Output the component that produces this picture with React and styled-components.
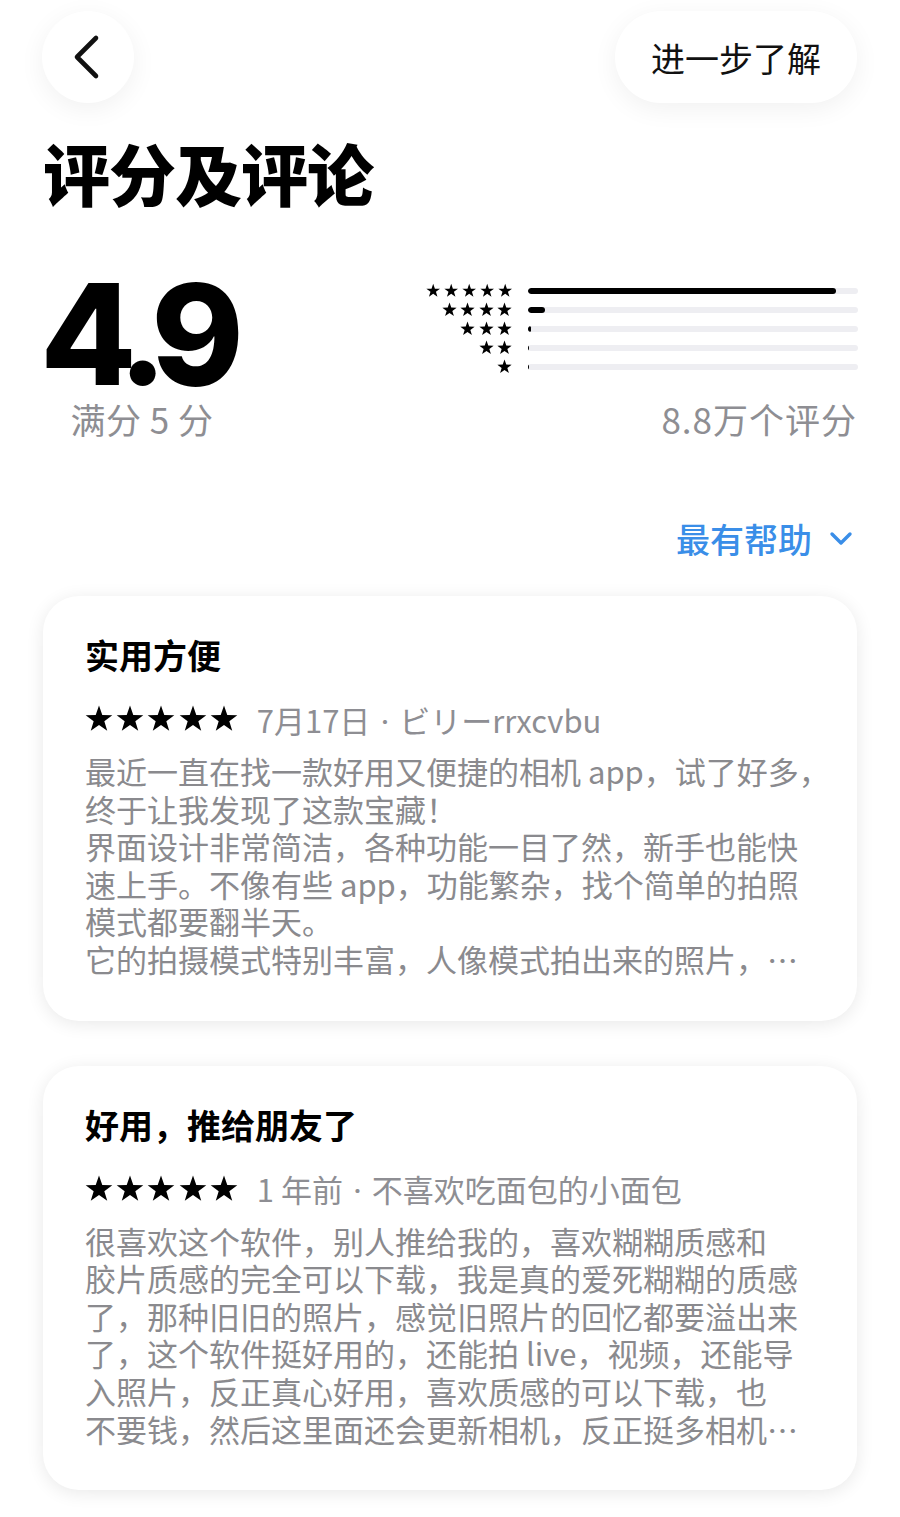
import React from "react";
import styled, { createGlobalStyle } from "styled-components";

const GlobalStyle = createGlobalStyle`
  body {
    margin: 0;
    background: #ffffff;
    font-family: "Noto Sans CJK SC", "Noto Sans", sans-serif;
    color: #000;
  }
`;

const histogram = [
  { stars: 5, pct: 93.3 },
  { stars: 4, pct: 5 },
  { stars: 3, pct: 1 },
  { stars: 2, pct: 0.3 },
  { stars: 1, pct: 0.3 },
];

const reviews = [
  {
    title: "实用方便",
    when: "7月17日",
    author: "ビリーrrxcvbu",
    lines: [
      "最近一直在找一款好用又便捷的相机 app，试了好多，",
      "终于让我发现了这款宝藏！",
      "界面设计非常简洁，各种功能一目了然，新手也能快",
      "速上手。不像有些 app，功能繁杂，找个简单的拍照",
      "模式都要翻半天。",
      "它的拍摄模式特别丰富，人像模式拍出来的照片，…",
    ],
  },
  {
    title: "好用，推给朋友了",
    when: "1 年前",
    author: "不喜欢吃面包的小面包",
    lines: [
      "很喜欢这个软件，别人推给我的，喜欢糊糊质感和",
      "胶片质感的完全可以下载，我是真的爱死糊糊的质感",
      "了，那种旧旧的照片，感觉旧照片的回忆都要溢出来",
      "了，这个软件挺好用的，还能拍 live，视频，还能导",
      "入照片，反正真心好用，喜欢质感的可以下载，也",
      "不要钱，然后这里面还会更新相机，反正挺多相机…",
    ],
  },
];

const Page = styled.div`
  padding: 11px 43px 40px 42px;
`;

const TopBar = styled.div`
  display: flex;
  justify-content: space-between;
  align-items: center;
`;

const RoundButton = styled.button`
  width: 92px;
  height: 92px;
  border: none;
  border-radius: 46px;
  background: #fff;
  box-shadow: 0 6px 26px rgba(0, 0, 0, 0.06);
  display: flex;
  align-items: center;
  justify-content: center;
  padding: 0;
`;

const PillButton = styled.button`
  height: 92px;
  width: 242px;
  border: none;
  border-radius: 46px;
  background: #fff;
  box-shadow: 0 6px 26px rgba(0, 0, 0, 0.06);
  font-family: "Noto Sans CJK SC", sans-serif;
  font-size: 34px;
  color: #111;
  padding: 0;
`;

const Title = styled.h1`
  margin: 29px 0 0 1px;
  font-size: 67px;
  line-height: 80px;
  font-weight: 900;
  letter-spacing: -1px;
`;

const Summary = styled.div`
  margin-top: 52px;
  display: grid;
  grid-template-columns: auto 1fr;
`;

const ScoreColumn = styled.div`
  display: flex;
  flex-direction: column;
  align-items: center;
  width: 200px;
`;

const BigScore = styled.div`
  font-family: Inter, "Liberation Sans", sans-serif;
  font-weight: 800;
  font-size: 140px;
  line-height: 140px;
  letter-spacing: -14px;
  margin-right: 14px;
`;

const Caption = styled.div`
  font-size: 35px;
  line-height: 40px;
  color: #8e8e93;
  margin-top: -5px;
  letter-spacing: ${(p) => (p.right ? "1px" : "0.5px")};
  text-align: ${(p) => (p.right ? "right" : "center")};
`;

const RightColumn = styled.div`
  display: flex;
  flex-direction: column;
  align-items: flex-end;
`;

const Histogram = styled.div`
  margin-top: 17px;
  width: 431px;
  height: 123px;
  display: flex;
  flex-direction: column;
`;

const HistRow = styled.div`
  display: grid;
  grid-template-columns: 86px 1fr;
  column-gap: 16px;
  align-items: center;
  height: 19px;
`;

const StarGroup = styled.div`
  display: flex;
  justify-content: ${(p) => (p.right ? "flex-end" : "flex-start")};
  gap: ${(p) => p.gap}px;
`;

const Track = styled.div`
  height: 6px;
  border-radius: 3px;
  background: #eeeef2;
  overflow: hidden;
  margin-right: -1px;
`;

const Fill = styled.div`
  height: 100%;
  border-radius: 3px;
  background: #000;
  min-width: 1px;
`;

const SortRow = styled.div`
  margin-top: 78px;
  display: flex;
  justify-content: flex-end;
  align-items: center;
  gap: 17px;
  color: #3a8ee8;
  font-size: 34px;
  line-height: 44px;
  font-weight: 500;
  padding-right: 4px;
`;

const CardList = styled.div`
  margin-top: 35px;
  display: flex;
  flex-direction: column;
  gap: 45px;
  padding-left: 1px;
`;

const Card = styled.div`
  background: #fff;
  border-radius: 36px;
  box-shadow: 0 3px 18px rgba(0, 0, 0, 0.09);
  padding: 37px 42px 43px 42px;
`;

const CardTitle = styled.div`
  font-size: 34px;
  line-height: 44px;
  font-weight: 700;
`;

const MetaRow = styled.div`
  margin-top: 22px;
  display: flex;
  align-items: center;
  gap: 19px;
  height: 40px;
`;

const MetaText = styled.span`
  font-size: 31px;
  color: #8e8e93;
  white-space: nowrap;
`;

const Dot = styled.span`
  font-family: Inter, "Liberation Sans", sans-serif;
  margin: 0 10px;
`;

const Body = styled.div`
  margin-top: 13px;
  font-size: 31px;
  line-height: 37.6px;
  color: #8a8a8e;
`;

const BodyLine = styled.div`
  white-space: nowrap;
`;

const starPoints = (size) => {
  const c = size / 2;
  const outer = size / 2;
  const inner = outer * 0.4;
  const pts = [];
  for (let i = 0; i < 10; i++) {
    const a = ((-90 + i * 36) * Math.PI) / 180;
    const r = i % 2 ? inner : outer;
    pts.push(`${(c + r * Math.cos(a)).toFixed(2)},${(c + 0.5 + r * Math.sin(a)).toFixed(2)}`);
  }
  return pts.join(" ");
};

const Star = ({ size }) => (
  <svg width={size} height={size} viewBox={`0 0 ${size} ${size}`}>
    <polygon points={starPoints(size)} fill="#000" />
  </svg>
);

const Stars = ({ count, size, gap, right }) => (
  <StarGroup gap={gap} right={right}>
    {Array.from({ length: count }).map((_, i) => (
      <Star key={i} size={size} />
    ))}
  </StarGroup>
);

const BackIcon = () => (
  <svg width="36" height="46" viewBox="0 0 36 46">
    <path d="M26 4 L7 23 L26 42" fill="none" stroke="#111" strokeWidth="4.6" strokeLinecap="round" strokeLinejoin="round" />
  </svg>
);

const ChevronDown = () => (
  <svg width="24" height="16" viewBox="0 0 24 16">
    <path d="M3 3 L12 12 L21 3" fill="none" stroke="#3a8ee8" strokeWidth="3.4" strokeLinecap="round" strokeLinejoin="round" />
  </svg>
);

const ReviewCard = ({ review }) => (
  <Card>
    <CardTitle>{review.title}</CardTitle>
    <MetaRow>
      <Stars count={5} size={28} gap={3.2} />
      <MetaText>
        {review.when}
        <Dot>·</Dot>
        {review.author}
      </MetaText>
    </MetaRow>
    <Body>
      {review.lines.map((l, i) => (
        <BodyLine key={i}>{l}</BodyLine>
      ))}
    </Body>
  </Card>
);

const App = () => {
  return (
    <>
      <GlobalStyle />
      <Page>
        <TopBar>
          <RoundButton>
            <BackIcon />
          </RoundButton>
          <PillButton>进一步了解</PillButton>
        </TopBar>

        <Title>评分及评论</Title>

        <Summary>
          <ScoreColumn>
            <BigScore>4.9</BigScore>
            <Caption>满分 5 分</Caption>
          </ScoreColumn>
          <RightColumn>
            <Histogram>
              {histogram.map((h) => (
                <HistRow key={h.stars}>
                  <Stars count={h.stars} size={15} gap={3.5} right />
                  <Track>
                    <Fill style={{ width: `${h.pct}%` }} />
                  </Track>
                </HistRow>
              ))}
            </Histogram>
            <Caption right>8.8万个评分</Caption>
          </RightColumn>
        </Summary>

        <SortRow>
          最有帮助
          <ChevronDown />
        </SortRow>

        <CardList>
          {reviews.map((r) => (
            <ReviewCard key={r.title} review={r} />
          ))}
        </CardList>
      </Page>
    </>
  );
};

export default App;
